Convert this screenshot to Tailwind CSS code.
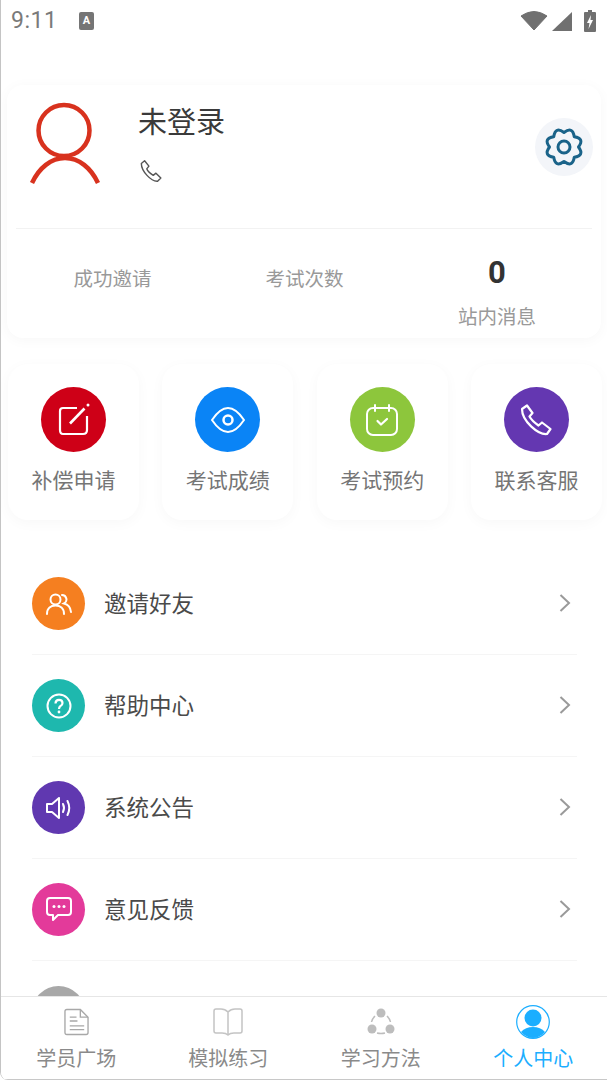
<!DOCTYPE html>
<html lang="zh">
    <head>
        <meta charset="UTF-8" />
        <meta name="viewport" content="width=device-width, initial-scale=1.0" />
        <script src="https://cdn.jsdelivr.net/npm/@tailwindcss/browser@4"></script>
        <title>个人中心</title>
    </head>
    <body class="w-[607px] h-[1080px] overflow-hidden bg-white font-['Roboto','Noto_Sans_CJK_SC',sans-serif]">
        <div class="w-full h-full flex flex-col border-l border-[#c4c4c4] rounded-bl-lg overflow-hidden">
            <!-- status bar -->
            <div class="h-[44px] shrink-0 flex items-center pl-[10px] pr-[10px] pb-[3px] text-[#7a7a7a]">
                <span class="text-[23px] leading-none w-[68px] tracking-[0.5px]">9:11</span>
                <svg width="15" height="18" viewBox="0 0 15 18"><rect width="15" height="18" rx="2" fill="#757575"/><text x="7.500" y="12" text-anchor="middle" font-size="11" font-weight="700" font-family="Roboto" fill="#fff">A</text></svg>
                <div class="flex-1"></div>
                <svg width="28" height="22" viewBox="0 0 28 22" class="mr-[4px]"><path d="M1 6Q14 -3 27 6L14 20Z" fill="#707070" stroke="#707070" stroke-linejoin="round"/></svg>
                <svg width="20" height="20" viewBox="0 0 20 20" class="mr-[12px]"><path d="M0 20L20 1V20Z" fill="#707070"/></svg>
                <svg width="12" height="22" viewBox="0 0 12 22" class="mr-[1px]"><path d="M4 0H8V2H11Q12 2 12 3V21Q12 22 11 22H1Q0 22 0 21V3Q0 2 1 2H4Z" fill="#707070"/><path d="M7 5L3 13H5.500L4.500 19L9 10H6.500Z" fill="#fff"/></svg>
            </div>

            <main class="flex-1 min-h-0 overflow-hidden flex flex-col pt-[41px]">
                <!-- profile card -->
                <section class="mx-[6px] h-[253px] shrink-0 rounded-2xl bg-white shadow-[0_2px_14px_rgba(0,0,0,0.035)] px-[9px]">
                    <div class="h-[144px] border-b border-[#f2f2f2] flex">
                        <svg width="76" height="84" viewBox="0 0 76 84" class="ml-[11px] mt-[17px] shrink-0">
                            <circle cx="37" cy="28.500" r="25.500" fill="none" stroke="#d8321e" stroke-width="4.500"/>
                            <path d="M5 81C12 66 24 56 38 56C52 56 64 66 71 81" fill="none" stroke="#d8321e" stroke-width="4.500"/>
                        </svg>
                        <div class="ml-[35px] pt-[19px] flex-1">
                            <p class="text-[29px] leading-[38px] text-[#3a3a3a]">未登录</p>
                            <svg width="26" height="26" viewBox="0 0 24 24" fill="none" stroke="#555" stroke-width="1.300" class="mt-[16px] ml-[-1px]"><path d="M4 5L7 2.500L11 7.500L9 10Q10 13 15 16L17.500 14L22 18.500L19 21.500C13 22 4 12 4 5Z" stroke-linejoin="round"/></svg>
                        </div>
                        <div class="w-[58px] h-[58px] mt-[33px] mr-[-1px] rounded-full bg-[#f3f5f9] flex items-center justify-center shrink-0">
                            <svg width="40" height="40" viewBox="0 0 40 40" fill="none" stroke="#1a6389" stroke-width="3" stroke-linejoin="round"><path d="M20 5.500Q28.650 -.9 30.250 9.750Q40.900 11.350 34.500 20Q40.900 28.650 30.250 30.250Q28.650 40.900 20 34.500Q11.350 40.900 9.750 30.250Q-.9 28.650 5.500 20Q-.9 11.350 9.750 9.750Q11.350 -.9 20 5.500Z"/><circle cx="20" cy="20" r="6"/></svg>
                        </div>
                    </div>
                    <div class="grid grid-cols-3 h-[109px] text-[#999] text-[19.500px] text-center">
                        <div class="pt-[36px] pl-[1px]">成功邀请</div>
                        <div class="pt-[36px] pl-[1px]">考试次数</div>
                        <div class="pl-[2px]">
                            <p class="text-[31px] leading-[36px] font-bold text-[#333] mt-[26px]">0</p>
                            <p class="leading-[26px] mt-[14px]">站内消息</p>
                        </div>
                    </div>
                </section>

                <!-- shortcuts -->
                <section class="mt-[26px] shrink-0 h-[156px] grid grid-cols-4 gap-x-[23.300px] ml-[7px] mr-[5px] text-[#757575] text-[21px]">
                    <div class="rounded-[20px] bg-white shadow-[0_3px_14px_rgba(0,0,0,0.03)] flex flex-col items-center pt-[23px]">
                        <div class="w-[65px] h-[65px] rounded-full bg-[#ce0017] flex items-center justify-center">
                            <svg width="34" height="34" viewBox="0 0 34 34" fill="none" stroke="#fff" stroke-width="2.200"><path d="M20 5H6Q3 5 3 8V27Q3 31 6 31H26Q30 31 30 27V13"/><path d="M13 20.500L27.500 5.500" stroke-width="2.600"/><circle cx="31" cy="2" r="1.500" fill="#fff" stroke="none"/></svg>
                        </div>
                        <p class="mt-[14px] leading-[30px]">补偿申请</p>
                    </div>
                    <div class="rounded-[20px] bg-white shadow-[0_3px_14px_rgba(0,0,0,0.03)] flex flex-col items-center pt-[23px]">
                        <div class="w-[65px] h-[65px] rounded-full bg-[#0a84f6] flex items-center justify-center">
                            <svg width="34" height="26" viewBox="0 0 34 26" fill="none" stroke="#fff" stroke-width="2"><path d="M1 13Q9 1 17 1Q25 1 33 13Q25 25 17 25Q9 25 1 13Z" stroke-linejoin="round"/><circle cx="17" cy="13" r="4.500" stroke-width="2.500"/></svg>
                        </div>
                        <p class="mt-[14px] leading-[30px]">考试成绩</p>
                    </div>
                    <div class="rounded-[20px] bg-white shadow-[0_3px_14px_rgba(0,0,0,0.03)] flex flex-col items-center pt-[23px]">
                        <div class="w-[65px] h-[65px] rounded-full bg-[#8dc63c] flex items-center justify-center">
                            <svg width="32" height="32" viewBox="0 0 32 32" fill="none" stroke="#fff" stroke-width="2" stroke-linecap="round" stroke-linejoin="round"><rect x="1" y="4" width="30" height="27" rx="6"/><path d="M9 1V7M23 1V7"/><path d="M11.500 17L15 20.500L21 15" stroke-width="2.200"/></svg>
                        </div>
                        <p class="mt-[14px] leading-[30px]">考试预约</p>
                    </div>
                    <div class="rounded-[20px] bg-white shadow-[0_3px_14px_rgba(0,0,0,0.03)] flex flex-col items-center pt-[23px]">
                        <div class="w-[65px] h-[65px] rounded-full bg-[#6437b1] flex items-center justify-center">
                            <svg width="32" height="32" viewBox="0 0 32 32" fill="none" stroke="#fff" stroke-width="2.200" stroke-linejoin="round"><path d="M2 5L7 1.500L12.500 9L9.500 12.500Q12 17 18.500 21.500L22 18.500L30.500 25L27 30C18 31 2 17 2 5Z"/></svg>
                        </div>
                        <p class="mt-[14px] leading-[30px]">联系客服</p>
                    </div>
                </section>

                <!-- menu list -->
                <section class="mt-[33px] ml-[31px] mr-[30px] text-[#4a4a4a] text-[22.500px]">
                    <div class="h-[102px] flex items-center border-b border-[#f5f5f5]">
                        <div class="w-[53px] h-[53px] rounded-full bg-[#f57f20] flex items-center justify-center shrink-0">
                            <svg width="26" height="22" viewBox="0 0 26 22" fill="none" stroke="#fff" stroke-width="2" stroke-linecap="round"><circle cx="9.500" cy="6.500" r="5"/><path d="M1 21C1 15 5 12.500 9.500 12.500C14 12.500 18 15 18 21"/><path d="M16 2A4.500 4.500 0 0 1 18 10.500C22 11.500 24.500 14 25 19"/></svg>
                        </div>
                        <span class="ml-[19px] flex-1 pt-[2px]">邀请好友</span>
                        <svg width="12" height="20" viewBox="0 0 12 20" fill="none" stroke="#9a9a9a" stroke-width="2" class="mr-[6px] mb-[2px]"><path d="M1.500 2L10 10L1.500 18"/></svg>
                    </div>
                    <div class="h-[102px] flex items-center border-b border-[#f5f5f5]">
                        <div class="w-[53px] h-[53px] rounded-full bg-[#1eb8ae] flex items-center justify-center shrink-0">
                            <svg width="26" height="26" viewBox="0 0 26 26" fill="none" stroke="#fff" stroke-width="2"><circle cx="13" cy="13" r="11.500"/><path d="M9.500 10.500C9.500 5.500 16.500 6 16.500 10Q16.500 12 14.500 13Q13 14 13 16" stroke-width="2.200"/><circle cx="13" cy="19" r="1.400" fill="#fff" stroke="none"/></svg>
                        </div>
                        <span class="ml-[19px] flex-1 pt-[2px]">帮助中心</span>
                        <svg width="12" height="20" viewBox="0 0 12 20" fill="none" stroke="#9a9a9a" stroke-width="2" class="mr-[6px] mb-[2px]"><path d="M1.500 2L10 10L1.500 18"/></svg>
                    </div>
                    <div class="h-[102px] flex items-center border-b border-[#f5f5f5]">
                        <div class="w-[53px] h-[53px] rounded-full bg-[#6038b0] flex items-center justify-center shrink-0">
                            <svg width="26" height="22" viewBox="0 0 26 22" fill="none" stroke="#fff" stroke-width="2" stroke-linecap="round" stroke-linejoin="round"><path d="M1 7H6L13 1V21L6 15H1Z"/><path d="M17 7Q19 11 17 15"/><path d="M21.500 4Q25 11 21.500 18"/></svg>
                        </div>
                        <span class="ml-[19px] flex-1 pt-[2px]">系统公告</span>
                        <svg width="12" height="20" viewBox="0 0 12 20" fill="none" stroke="#9a9a9a" stroke-width="2" class="mr-[6px] mb-[2px]"><path d="M1.500 2L10 10L1.500 18"/></svg>
                    </div>
                    <div class="h-[102px] flex items-center border-b border-[#f5f5f5]">
                        <div class="w-[53px] h-[53px] rounded-full bg-[#e33a9a] flex items-center justify-center shrink-0">
                            <svg width="26" height="25" viewBox="0 0 26 25" fill="none" stroke="#fff" stroke-width="2" stroke-linejoin="round"><path d="M4 1H22Q25 1 25 4V15Q25 18 22 18H12L7 23V18H4Q1 18 1 15V4Q1 1 4 1Z"/><g fill="#fff" stroke="none"><circle cx="8" cy="9.500" r="1.500"/><circle cx="13" cy="9.500" r="1.500"/><circle cx="18" cy="9.500" r="1.500"/></g></svg>
                        </div>
                        <span class="ml-[19px] flex-1 pt-[2px]">意见反馈</span>
                        <svg width="12" height="20" viewBox="0 0 12 20" fill="none" stroke="#9a9a9a" stroke-width="2" class="mr-[6px] mb-[2px]"><path d="M1.500 2L10 10L1.500 18"/></svg>
                    </div>
                    <div class="h-[102px] pt-[25px]">
                        <div class="w-[53px] h-[53px] rounded-full bg-[#a8a8a8]"></div>
                    </div>
                </section>
            </main>

            <!-- bottom nav -->
            <nav class="h-[84px] shrink-0 grid grid-cols-4 bg-white border-t border-[#e6e6e6] border-b-[#c8c8c8] border-b text-[20px] text-[#8a8a8a] text-center">
                <div class="flex flex-col items-center pt-[11px] pr-[1px]">
                    <svg width="25" height="28" viewBox="0 0 26 28" fill="none" stroke="#a8a8a8" stroke-width="1.400"><path d="M3 1H17L25 9V25Q25 27 23 27H3Q1 27 1 25V3Q1 1 3 1Z"/><path d="M17 1V9H25"/><path d="M6 9H13M6 13H14M6 18H21M6 22H21"/></svg>
                    <span class="mt-[10px] leading-[26px]">学员广场</span>
                </div>
                <div class="flex flex-col items-center pt-[11px]">
                    <svg width="30" height="28" viewBox="0 0 30 28" fill="none" stroke="#c4c4c4" stroke-width="1.500"><path d="M15 4Q12 1 8 1H3Q1 1 1 3V23Q1 25 3 25H9Q13 25 15 27Q17 25 21 25H27Q29 25 29 23V3Q29 1 27 1H22Q18 1 15 4V27"/></svg>
                    <span class="mt-[10px] leading-[26px]">模拟练习</span>
                </div>
                <div class="flex flex-col items-center pt-[10px] pl-[2px]">
                    <svg width="28" height="29" viewBox="0 0 28 29" fill="none" stroke="#bdbdbd" stroke-width="1.500"><g fill="#bdbdbd" stroke="none"><circle cx="14" cy="6" r="4.500"/><circle cx="5" cy="22" r="4.500"/><circle cx="23" cy="22" r="4.500"/></g><path d="M8 9Q5 12 4.500 15M20 9Q23 12 23.500 15M10 26Q14 27 18 26"/></svg>
                    <span class="mt-[10px] leading-[26px]">学习方法</span>
                </div>
                <div class="flex flex-col items-center pt-[8px] pl-[4px] text-[#1baeff]">
                    <svg width="34" height="34" viewBox="0 0 34 34"><circle cx="17" cy="17" r="16.300" fill="none" stroke="#1baeff" stroke-width="1.200"/><circle cx="17" cy="13" r="8.500" fill="#1baeff"/><path d="M5 27C8 23.500 12 22 17 22C22 22 26 23.500 29 27C25 31 21 33 17 33C13 33 9 31 5 27Z" fill="#1baeff"/></svg>
                    <span class="mt-[7px] leading-[26px]">个人中心</span>
                </div>
            </nav>
        </div>
    </body>
</html>
